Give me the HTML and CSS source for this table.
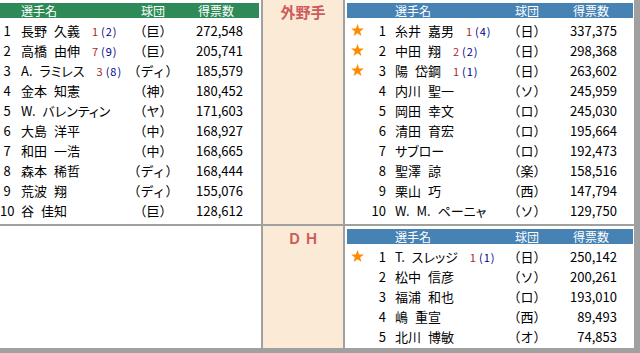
FILE: index.html
```html
<!DOCTYPE html>
<html lang="ja">
<head>
<meta charset="utf-8">
<title>オールスター ファン投票</title>
<link rel="stylesheet" href="styles.css">
</head>
<body>
<div class="frame">
  <div class="board">
    <section class="cell cell-left">
      <div class="lrow head head-green"><span></span><span class="nm">選手名</span><span class="tm">球団</span><span class="vh">得票数</span></div>
      <div class="lrow"><span class="rk">1</span><span class="nm">長野 久義<span class="mark"><span class="mr">1</span><span class="mb">(2)</span></span></span><span class="tm">（巨）</span><span class="vt">272,548</span></div>
      <div class="lrow"><span class="rk">2</span><span class="nm">高橋 由伸<span class="mark"><span class="mr">7</span><span class="mb">(9)</span></span></span><span class="tm">（巨）</span><span class="vt">205,741</span></div>
      <div class="lrow"><span class="rk">3</span><span class="nm">A. ラミレス<span class="mark"><span class="mr">3</span><span class="mb">(8)</span></span></span><span class="tm">（ディ）</span><span class="vt">185,579</span></div>
      <div class="lrow"><span class="rk">4</span><span class="nm">金本 知憲</span><span class="tm">（神）</span><span class="vt">180,452</span></div>
      <div class="lrow"><span class="rk">5</span><span class="nm">W. バレンティン</span><span class="tm">（ヤ）</span><span class="vt">171,603</span></div>
      <div class="lrow"><span class="rk">6</span><span class="nm">大島 洋平</span><span class="tm">（中）</span><span class="vt">168,927</span></div>
      <div class="lrow"><span class="rk">7</span><span class="nm">和田 一浩</span><span class="tm">（中）</span><span class="vt">168,665</span></div>
      <div class="lrow"><span class="rk">8</span><span class="nm">森本 稀哲</span><span class="tm">（ディ）</span><span class="vt">168,444</span></div>
      <div class="lrow"><span class="rk">9</span><span class="nm">荒波 翔</span><span class="tm">（ディ）</span><span class="vt">155,076</span></div>
      <div class="lrow"><span class="rk">10</span><span class="nm">谷 佳知</span><span class="tm">（巨）</span><span class="vt">128,612</span></div>
    </section>
    <section class="cell cell-pos"><h2 class="pos">外野手</h2></section>
    <section class="cell cell-right">
      <div class="rrow head head-blue"><span></span><span></span><span class="nm">選手名</span><span class="tm">球団</span><span class="vh">得票数</span></div>
      <div class="rrow"><span class="st"><svg class="star" viewBox="0 0 13 12"><polygon points="6.5,0 8.1,4.4 12.9,4.5 9.1,7.4 10.5,12 6.5,9.3 2.5,12 3.9,7.4 0.1,4.5 4.9,4.4"/></svg></span><span class="rk">1</span><span class="nm">糸井 嘉男<span class="mark"><span class="mr">1</span><span class="mb">(4)</span></span></span><span class="tm">（日）</span><span class="vt">337,375</span></div>
      <div class="rrow"><span class="st"><svg class="star" viewBox="0 0 13 12"><polygon points="6.5,0 8.1,4.4 12.9,4.5 9.1,7.4 10.5,12 6.5,9.3 2.5,12 3.9,7.4 0.1,4.5 4.9,4.4"/></svg></span><span class="rk">2</span><span class="nm">中田 翔<span class="mark"><span class="mr">2</span><span class="mb">(2)</span></span></span><span class="tm">（日）</span><span class="vt">298,368</span></div>
      <div class="rrow"><span class="st"><svg class="star" viewBox="0 0 13 12"><polygon points="6.5,0 8.1,4.4 12.9,4.5 9.1,7.4 10.5,12 6.5,9.3 2.5,12 3.9,7.4 0.1,4.5 4.9,4.4"/></svg></span><span class="rk">3</span><span class="nm">陽 岱鋼<span class="mark"><span class="mr">1</span><span class="mb">(1)</span></span></span><span class="tm">（日）</span><span class="vt">263,602</span></div>
      <div class="rrow"><span class="st"></span><span class="rk">4</span><span class="nm">内川 聖一</span><span class="tm">（ソ）</span><span class="vt">245,959</span></div>
      <div class="rrow"><span class="st"></span><span class="rk">5</span><span class="nm">岡田 幸文</span><span class="tm">（ロ）</span><span class="vt">245,030</span></div>
      <div class="rrow"><span class="st"></span><span class="rk">6</span><span class="nm">清田 育宏</span><span class="tm">（ロ）</span><span class="vt">195,664</span></div>
      <div class="rrow"><span class="st"></span><span class="rk">7</span><span class="nm">サブロー</span><span class="tm">（ロ）</span><span class="vt">192,473</span></div>
      <div class="rrow"><span class="st"></span><span class="rk">8</span><span class="nm">聖澤 諒</span><span class="tm">（楽）</span><span class="vt">158,516</span></div>
      <div class="rrow"><span class="st"></span><span class="rk">9</span><span class="nm">栗山 巧</span><span class="tm">（西）</span><span class="vt">147,794</span></div>
      <div class="rrow"><span class="st"></span><span class="rk">10</span><span class="nm">W. M. ペーニャ</span><span class="tm">（ソ）</span><span class="vt">129,750</span></div>
    </section>
    <section class="cell cell-empty"></section>
    <section class="cell cell-pos cell-pos-dh"><h2 class="pos">Ｄ Ｈ</h2></section>
    <section class="cell cell-right cell-dh">
      <div class="rrow head head-blue"><span></span><span></span><span class="nm">選手名</span><span class="tm">球団</span><span class="vh">得票数</span></div>
      <div class="rrow"><span class="st"><svg class="star" viewBox="0 0 13 12"><polygon points="6.5,0 8.1,4.4 12.9,4.5 9.1,7.4 10.5,12 6.5,9.3 2.5,12 3.9,7.4 0.1,4.5 4.9,4.4"/></svg></span><span class="rk">1</span><span class="nm">T. スレッジ<span class="mark"><span class="mr">1</span><span class="mb">(1)</span></span></span><span class="tm">（日）</span><span class="vt">250,142</span></div>
      <div class="rrow"><span class="st"></span><span class="rk">2</span><span class="nm">松中 信彦</span><span class="tm">（ソ）</span><span class="vt">200,261</span></div>
      <div class="rrow"><span class="st"></span><span class="rk">3</span><span class="nm">福浦 和也</span><span class="tm">（ロ）</span><span class="vt">193,010</span></div>
      <div class="rrow"><span class="st"></span><span class="rk">4</span><span class="nm">嶋 重宣</span><span class="tm">（西）</span><span class="vt">89,493</span></div>
      <div class="rrow"><span class="st"></span><span class="rk">5</span><span class="nm">北川 博敏</span><span class="tm">（オ）</span><span class="vt">74,853</span></div>
    </section>
  </div>
</div>
</body>
</html>
```
FILE: styles.css
```css
html, body {
  margin: 0;
  padding: 0;
}
body {
  background: #a0a0a0;
  font-family: "Noto Sans CJK JP", "Noto Sans", sans-serif;
  font-size: 13px;
  color: #000;
}
.frame {
  width: 634px;
  height: 348px;
  background: #fff;
}
.board {
  display: grid;
  grid-template-columns: 261px 80px 1fr;
  grid-template-rows: 224px 1fr;
  gap: 2px;
  height: 100%;
  background: #a0a0a0;
}
.cell {
  background: #fff;
  padding-top: 3px;
}
.cell-left {
  padding-right: 2px;
}
.cell-right {
  padding-left: 2px;
  padding-right: 1px;
}
.cell-pos {
  background: #faead6;
  display: flex;
  justify-content: center;
}
.pos {
  margin: 0;
  font-size: 15px;
  font-weight: bold;
  line-height: 17px;
  color: #cd5c5c;
}
.cell-pos-dh .pos {
  padding-top: 1px;
  font-size: 14px;
}
.lrow {
  display: grid;
  grid-template-columns: 14px 119px 40px 1fr;
  height: 20px;
  align-items: center;
  white-space: nowrap;
}
.rrow {
  display: grid;
  grid-template-columns: 20px 19px 121px 40px 1fr;
  height: 20px;
  align-items: center;
  white-space: nowrap;
}
.head {
  height: 15px;
  line-height: 15px;
  font-size: 12px;
  color: #fff;
  margin-bottom: 2px;
}
.head .nm {
  word-spacing: 0;
}
.head-green {
  background: #2e8b57;
}
.head-blue {
  background: #4682b4;
}
.lrow .rk {
  text-align: center;
}
.rrow .rk {
  text-align: right;
}
.nm {
  word-spacing: 4px;
  font-feature-settings: "palt";
}
.lrow .nm {
  padding-left: 7px;
}
.rrow .nm {
  padding-left: 9px;
}
.tm {
  display: flex;
  justify-content: center;
}
.vt {
  text-align: right;
  padding-right: 16px;
}
.lrow .vh {
  padding-left: 25px;
}
.rrow .vh {
  padding-left: 26px;
}
.st {
  display: flex;
  justify-content: center;
  align-items: center;
}
.star {
  width: 13px;
  height: 12px;
  fill: #ff8c00;
  display: block;
}
.mark {
  margin-left: 12px;
  font-size: 11px;
  word-spacing: 0;
}
.mr {
  color: #a52a2a;
}
.mb {
  color: #00008b;
  margin-left: 3px;
  letter-spacing: 1px;
}
```
